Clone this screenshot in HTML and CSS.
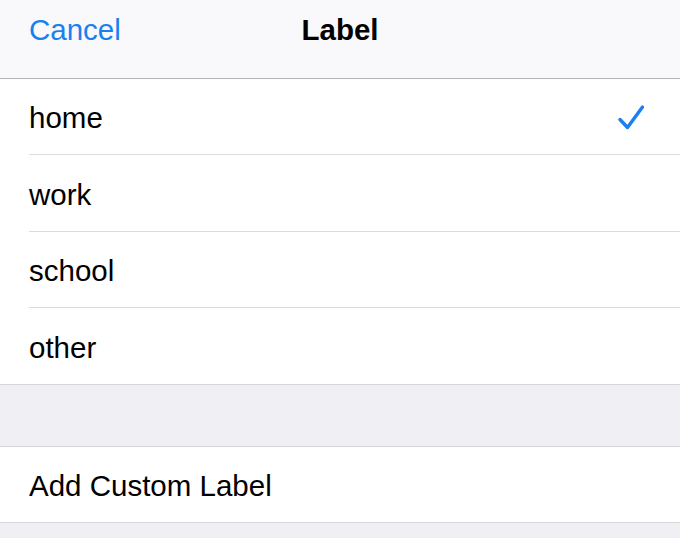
FILE: index.html
```html
<!DOCTYPE html>
<html lang="en">
<head>
  <meta charset="UTF-8">
  <meta name="viewport" content="width=device-width, initial-scale=1.0">
  <title>Label</title>
  <link rel="stylesheet" href="styles.css">
</head>
<body>
  <div id="screen">
    <header class="navbar">
      <span class="nav-cancel">Cancel</span>
      <span class="nav-title">Label</span>
    </header>

    <ul class="group">
      <li class="row">
        <span class="row-text">home</span>
        <svg class="check" width="28" height="28" viewBox="0 0 28 28">
          <path d="M3 15.5 L10.5 23.5 L25.5 3" fill="none" stroke="#1a7ff0" stroke-width="3.4" stroke-linecap="round" stroke-linejoin="round"/>
        </svg>
      </li>
      <li class="row tall"><span class="row-text">work</span></li>
      <li class="row"><span class="row-text">school</span></li>
      <li class="row"><span class="row-text">other</span></li>
    </ul>

    <div class="spacer"></div>

    <ul class="group single">
      <li class="row"><span class="row-text">Add Custom Label</span></li>
    </ul>
  </div>
</body>
</html>
```

FILE: styles.css
```css
* {
  margin: 0;
  padding: 0;
  box-sizing: border-box;
  font-family: "Liberation Sans", Arial, sans-serif;
}
body {
  background: #efeff4;
  width: 680px;
  height: 538px;
  overflow: hidden;
}
#screen {
  display: flex;
  flex-direction: column;
}
.navbar {
  position: relative;
  height: 79px;
  background: #f9f9fb;
  border-bottom: 1px solid #b4b4b6;
  display: flex;
  align-items: flex-start;
  justify-content: center;
  padding-top: 11px;
  font-size: 29.5px;
  line-height: 38px;
}
.nav-cancel {
  position: absolute;
  left: 29px;
  top: 11px;
  color: #1a7ff0;
}
.nav-title {
  font-weight: bold;
  color: #000;
}
.group {
  list-style: none;
  background: #fff;
  border-bottom: 1px solid #d6d6da;
  padding-left: 29px;
}
.group.single {
  border-top: 1px solid #d6d6da;
}
.row {
  height: 76px;
  display: flex;
  align-items: center;
  justify-content: space-between;
  padding-right: 35px;
  border-bottom: 1px solid #dcdce0;
  font-size: 29.5px;
  color: #000;
}
.row.tall {
  height: 77px;
}
.row:last-child {
  border-bottom: none;
}
.group.single .row {
  height: 75px;
}
.row-text {
  padding-top: 3px;
}
.check {
  display: block;
  margin-top: 2px;
}
.spacer {
  height: 61px;
}
```
